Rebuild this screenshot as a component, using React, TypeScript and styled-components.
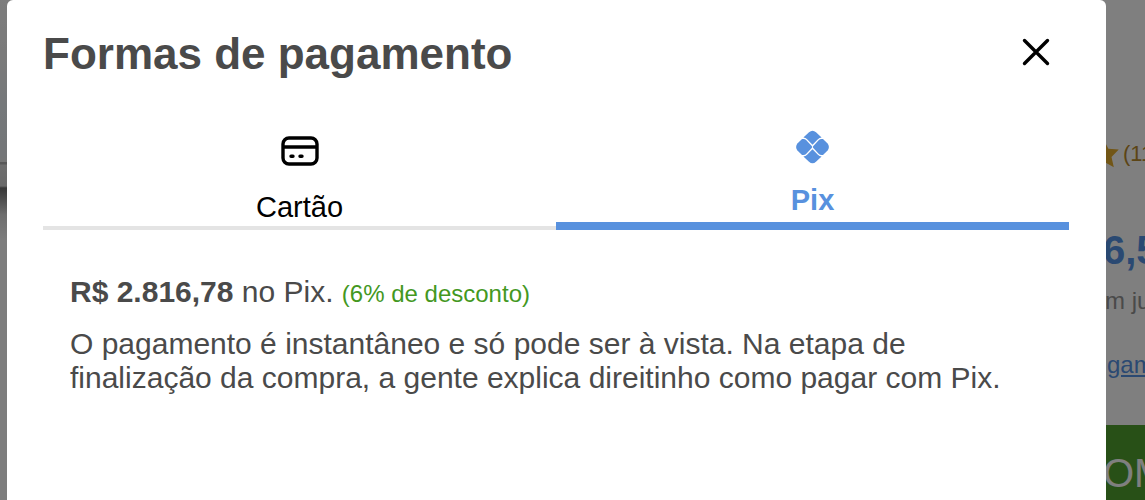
import React from "react";
import styled, { createGlobalStyle } from "styled-components";

const GlobalStyle = createGlobalStyle`
  * { box-sizing: border-box; }
  body {
    margin: 0;
    background: #ffffff;
    color: #4a4a4a;
    font-family: "Liberation Sans", Arial, sans-serif;
    overflow: hidden;
  }
`;

const ProductPage = styled.main`
  display: flex;
  justify-content: space-between;
  min-height: 100vh;
`;

const Gallery = styled.div`
  width: 50%;
  background: linear-gradient(
    #fafafa 0, #f4f4f4 60px, #eaf0f4 110px, #e8ecf0 155px, #ececec 162px,
    #b0b0b0 162px, #b0b0b0 164px, #dcdcdc 165px, #d4d4d4 186px,
    #707070 188px, #8a8a8a 195px, #dcdcdc 215px, #fafafa 240px
  );
`;

const ProductInfo = styled.aside`
  display: flex;
  flex-direction: column;
  width: 42px;
  padding-top: 137px;
  overflow: hidden;
  white-space: nowrap;
`;

const Rating = styled.div`
  display: flex;
  align-items: center;
  height: 34px;
  gap: 4px;
  margin-left: -14px;
  color: #b98a2c;
  font-size: 22px;
  svg { flex: none; }
`;

const Price = styled.div`
  margin-top: 55px;
  color: #5592e4;
  font-size: 40px;
  font-weight: 700;
  line-height: 48px;
`;

const Installments = styled.div`
  padding-left: 2px;
  margin-top: 13px;
  color: #949494;
  font-size: 24px;
  line-height: 28px;
`;

const PaymentLink = styled.a`
  padding-left: 4px;
  margin-top: 36px;
  color: #5592e4;
  font-size: 24px;
  line-height: 28px;
`;

const BuyButton = styled.button`
  flex: 1;
  margin: 46px 0 0;
  padding: 22px 0 0;
  border: 0;
  background: #50a02e;
  color: #ffffff;
  font: 40px "Liberation Sans", Arial, sans-serif;
  text-align: left;
`;

const Backdrop = styled.div`
  position: fixed;
  inset: 0;
  display: flex;
  padding: 0 39px 0 7px;
  background: rgba(0, 0, 0, 0.5);
`;

const Dialog = styled.section`
  flex: 1;
  padding: 29px 37px 28px 36px;
  border-radius: 6px 6px 0 0;
  background: #ffffff;
`;

const DialogHeader = styled.header`
  display: flex;
  align-items: flex-start;
  justify-content: space-between;
  padding-right: 19px;
`;

const Title = styled.h1`
  margin: 0;
  font-size: 44px;
  line-height: 50px;
`;

const CloseButton = styled.button`
  display: flex;
  padding: 9px 0 0;
  border: 0;
  background: none;
  color: #000000;
`;

const Tabs = styled.div`
  display: flex;
  height: 108px;
  margin-top: 43px;
`;

const Tab = styled.button<{ $active?: boolean }>`
  display: flex;
  flex: 1;
  flex-direction: column;
  align-items: center;
  justify-content: flex-end;
  gap: ${(p) => (p.$active ? 21 : 26)}px;
  padding: 0 0 ${(p) => (p.$active ? 7 : 4)}px;
  border: 0;
  border-bottom: ${(p) => (p.$active ? "8px solid #5891de" : "4px solid #e4e4e4")};
  background: none;
  color: ${(p) => (p.$active ? "#5891de" : "#000000")};
  font: ${(p) => (p.$active ? 700 : 400)} 29px/30px "Liberation Sans", Arial, sans-serif;
`;

const TabPanel = styled.div`
  padding: 45px 27px;
  font-size: 30px;
  line-height: 34px;
`;

const Line = styled.p`
  margin: 0 0 16px;
`;

const Discount = styled.span`
  color: #44981f;
  font-size: 24px;
`;

function StarIcon() {
  return (
    <svg width="30" height="28" viewBox="0 0 26 24" fill="#e4ac2c" aria-hidden="true">
      <path d="M13 0l3.800 7.500 9 .6-6.300 6.500 2 8.900L13 18.800l-8.500 4.700 2-8.900L.2 8.100l9-.6z" />
    </svg>
  );
}

function CloseIcon() {
  return (
    <svg width="28" height="28" viewBox="0 0 28 28" fill="none" stroke="currentColor" strokeWidth="3.400" strokeLinecap="round" aria-hidden="true">
      <path d="M2.500 2.500l23 23M25.500 2.500l-23 23" />
    </svg>
  );
}

function CardIcon() {
  return (
    <svg width="38" height="30" viewBox="0 0 38 30" fill="none" stroke="currentColor" strokeWidth="3.400" aria-hidden="true">
      <rect x="2" y="2" width="34" height="26" rx="6" />
      <path d="M2 11h34" />
      <path d="M10 20.200h2M19 20.200h2" strokeLinecap="round" />
    </svg>
  );
}

function PixIcon() {
  return (
    <svg width="34" height="34" viewBox="0 0 34 34" fill="currentColor" aria-hidden="true">
      <path d="M7.400 7.400L13 2.200q3.500-3 7 0l5.600 5.200c-1.500.2-2.700.8-3.700 1.800L16.500 14.800l-5.400-5.600c-1-1-2.200-1.600-3.700-1.800z" />
      <path d="M7.400 26.600L13 31.800q3.500 3 7 0l5.600-5.200c-1.500-.2-2.700-.8-3.700-1.800L16.500 19.200l-5.400 5.600c-1 1-2.200 1.600-3.700 1.800z" />
      <path d="M6 8.900h1.500c1 0 1.900.4 2.600 1.100L15.700 16q.8 1 0 2l-5.600 6c-.7.7-1.600 1.100-2.600 1.100H6L1.400 20.500q-2.600-3.500 0-7z" />
      <path d="M27 8.900h-1.500c-1 0-1.900.4-2.600 1.100L17.300 16q-.8 1 0 2l5.600 6c.7.7 1.600 1.100 2.600 1.100H27l4.600-4.600q2.600-3.500 0-7z" />
    </svg>
  );
}

export default function App() {
  return (
    <>
      <GlobalStyle />
      <ProductPage>
        <Gallery />
        <ProductInfo>
          <Rating>
            <StarIcon />
            (11
          </Rating>
          <Price>6,5</Price>
          <Installments>m ju</Installments>
          <PaymentLink href="#pagamento">gam</PaymentLink>
          <BuyButton type="button">OM</BuyButton>
        </ProductInfo>
      </ProductPage>
      <Backdrop>
        <Dialog role="dialog" aria-modal="true" aria-labelledby="dialog-title">
          <DialogHeader>
            <Title id="dialog-title">Formas de pagamento</Title>
            <CloseButton type="button" aria-label="Fechar">
              <CloseIcon />
            </CloseButton>
          </DialogHeader>
          <Tabs role="tablist">
            <Tab type="button" role="tab" aria-selected={false}>
              <CardIcon />
              Cartão
            </Tab>
            <Tab $active type="button" role="tab" aria-selected id="tab-pix" aria-controls="panel-pix">
              <PixIcon />
              Pix
            </Tab>
          </Tabs>
          <TabPanel role="tabpanel" id="panel-pix" aria-labelledby="tab-pix">
            <Line>
              <strong>R$ 2.816,78</strong> no Pix. <Discount>(6% de desconto)</Discount>
            </Line>
            <Line>
              O pagamento é instantâneo e só pode ser à vista. Na etapa de finalização da compra, a gente
              explica direitinho como pagar com Pix.
            </Line>
          </TabPanel>
        </Dialog>
      </Backdrop>
    </>
  );
}
